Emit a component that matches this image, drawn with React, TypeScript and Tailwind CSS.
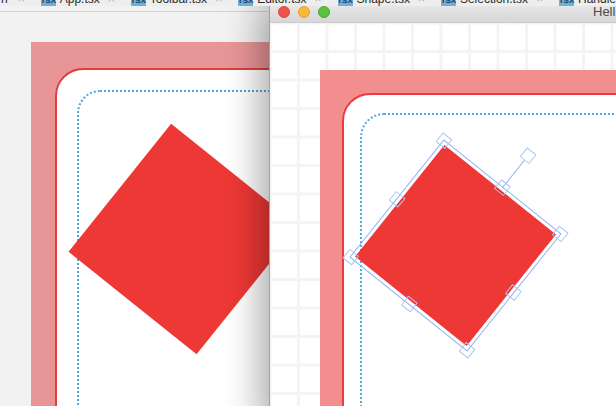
import React from "react";

const TABS = ["App.tsx", "Toolbar.tsx", "Editor.tsx", "Shape.tsx", "Selection.tsx", "Handles.tsx"];

const HANDLES = [
  "left-0 top-0",
  "left-1/2 top-0",
  "left-full top-0",
  "left-0 top-1/2",
  "left-full top-1/2",
  "left-0 top-full",
  "left-1/2 top-full",
  "left-full top-full",
];

function TabStrip() {
  return (
    <div className="relative z-20 h-[6px] overflow-hidden bg-[#eeeeee]">
      <div className="-mt-[8px] flex h-[14px] items-start whitespace-nowrap text-[12px] leading-[14px] text-[#2a2a2a] [font-family:'Liberation_Sans',Arial,sans-serif]">
        <span className="ml-[1px] shrink-0">n</span>
        <span className="ml-[10px] shrink-0 text-[#b0b0b0]">×</span>
        {TABS.map((t) => (
          <React.Fragment key={t}>
            <span className="ml-[16px] mt-[1px] flex h-[13px] w-[15px] shrink-0 items-end justify-center bg-[#6eb0da] pb-[1px] text-[8px] font-bold leading-none text-[#1c3c5e]">
              TSX
            </span>
            <span className="ml-[4px] shrink-0">{t}</span>
            <span className="ml-[8px] shrink-0 text-[#b0b0b0]">×</span>
          </React.Fragment>
        ))}
      </div>
    </div>
  );
}

function Diamond({ className }: { className: string }) {
  return <div className={`absolute rotate-[38.7deg] bg-[#ee3835] ${className}`} />;
}

function Selection() {
  return (
    <div className="absolute left-[109.5px] top-[146.5px] h-[151px] w-[151px] rotate-[38.7deg] border border-[#8fb6f1]">
      {/* rotate handle */}
      <div className="absolute bottom-full left-1/2 h-[35px] w-px -translate-x-1/2 bg-[#8fb6f1]" />
      <div className="absolute left-1/2 top-[-41px] h-[12px] w-[12px] -translate-x-1/2 -translate-y-1/2 border border-[#a9c7f5]" />
      {HANDLES.map((h) => (
        <div key={h} className={`absolute h-[12px] w-[12px] -translate-x-1/2 -translate-y-1/2 border border-[#a9c7f5] ${h}`} />
      ))}
    </div>
  );
}

function Window() {
  return (
    <div className="absolute left-[269px] top-[1px] z-10 flex h-[430px] w-[370px] flex-col overflow-hidden rounded-tl-[5px] border-l border-[#a3a3a3] shadow-[-6px_0_38px_rgba(0,0,0,0.38)]">
      <div className="flex h-[22px] shrink-0 items-center border-b border-[#cdcdcd] bg-[linear-gradient(#ececec,#d6d6d6)] pl-[8px]">
        <span className="h-[12px] w-[12px] shrink-0 rounded-full border border-[#e0443f] bg-[#f0524e]" />
        <span className="ml-[8px] h-[12px] w-[12px] shrink-0 rounded-full border border-[#e1a22e] bg-[#f7b83b]" />
        <span className="ml-[8px] h-[12px] w-[12px] shrink-0 rounded-full border border-[#4ca632] bg-[#5cc23d]" />
        <span className="ml-[263px] shrink-0 whitespace-nowrap text-[13px] text-[#4b4b4b] [font-family:'Liberation_Sans',Arial,sans-serif]">
          Hello World
        </span>
      </div>
      <div className="relative flex-1 overflow-hidden bg-white bg-[image:linear-gradient(to_right,#f4f4f4_3px,transparent_3px),linear-gradient(to_bottom,#f4f4f4_3px,transparent_3px)] bg-[length:28.5px_28.5px] bg-[position:27px_27px] pl-[50px] pt-[47px]">
        <div className="h-[400px] w-[340px] bg-[#f28e90] pl-[22px] pt-[23px]">
          <div className="h-[400px] w-[400px] rounded-tl-[28px] border-2 border-[#ee3a3a] bg-white pl-[16px] pt-[18px]">
            <div className="h-[400px] w-[400px] rounded-tl-[24px] border-2 border-dotted border-[#4cade2]" />
          </div>
        </div>
        <Diamond className="left-[113.5px] top-[150.5px] h-[143px] w-[143px]" />
        <Selection />
      </div>
    </div>
  );
}

export default function App() {
  return (
    <div className="relative h-[406px] w-[616px] overflow-hidden bg-[#f2f2f2]">
      <TabStrip />
      <div className="h-[6px] w-[270px] border-b border-[#d0d0d0]" />

      {/* zoomed preview behind the window */}
      <div className="pl-[31px] pt-[30px]">
        <div className="h-[400px] w-[300px] bg-[#e89597] pl-[24px] pt-[26px]">
          <div className="h-[400px] w-[400px] rounded-tl-[28px] border-2 border-[#df3d40] bg-white pl-[20px] pt-[20px]">
            <div className="h-[400px] w-[400px] rounded-tl-[23px] border-2 border-dotted border-[#4aa6dc]" />
          </div>
        </div>
      </div>
      <Diamond className="left-[101.7px] top-[156.7px] h-[163.6px] w-[163.6px]" />

      <Window />
    </div>
  );
}
